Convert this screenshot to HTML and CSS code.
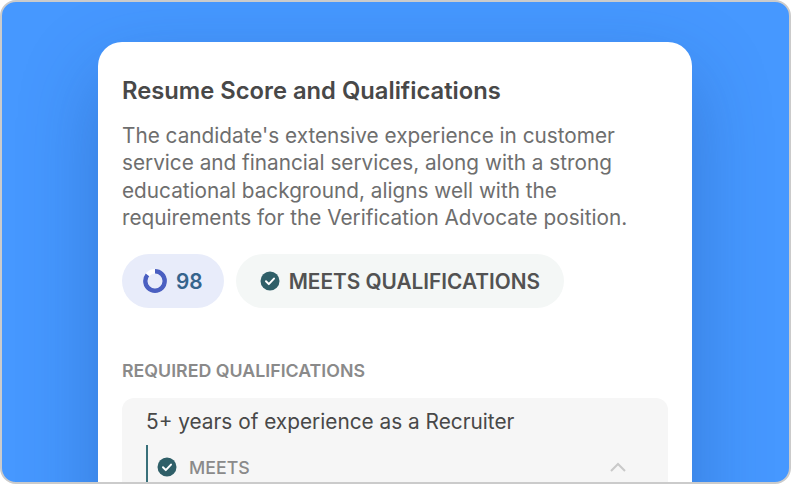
FILE: index.html
```html
<!DOCTYPE html>
<html lang="en">
<head>
<meta charset="utf-8">
<title>Resume Score and Qualifications</title>
<link rel="stylesheet" href="styles.css">
</head>
<body>
<main class="frame">
  <section class="card">
    <h1 class="title">Resume Score and Qualifications</h1>
    <p class="summary">The candidate's extensive experience in customer service and financial services, along with a strong educational background, aligns well with the requirements for the Verification Advocate position.</p>
    <div class="badges">
      <div class="badge badge-score">
        <svg class="ring" width="24" height="24" viewBox="0 0 24 24" aria-hidden="true">
          <circle cx="12" cy="12" r="9.7" fill="none" stroke="#fff" stroke-width="4.4"/>
          <circle cx="12" cy="12" r="9.7" fill="none" stroke="#4a5fc1" stroke-width="4.4" stroke-dasharray="52 60.9" transform="rotate(-90 12 12)"/>
        </svg>
        <span class="score">98</span>
      </div>
      <div class="badge badge-meets">
        <svg class="check" width="20" height="20" viewBox="0 0 20 20" aria-hidden="true">
          <circle cx="10" cy="10" r="9.5" fill="#2f5f68"/>
          <path d="M6 10.3l2.8 2.8L14 7.6" fill="none" stroke="#fff" stroke-width="2" stroke-linecap="round" stroke-linejoin="round"/>
        </svg>
        <span>MEETS QUALIFICATIONS</span>
      </div>
    </div>
    <h2 class="section-label">REQUIRED QUALIFICATIONS</h2>
    <div class="qual">
      <div class="qual-name">5+ years of experience as a Recruiter</div>
      <div class="qual-detail">
        <svg class="check" width="20" height="20" viewBox="0 0 20 20" aria-hidden="true">
          <circle cx="10" cy="10" r="9.5" fill="#2f5f68"/>
          <path d="M6 10.3l2.8 2.8L14 7.6" fill="none" stroke="#fff" stroke-width="2" stroke-linecap="round" stroke-linejoin="round"/>
        </svg>
        <span class="meets">MEETS</span>
        <svg class="chevron" width="16" height="10" viewBox="0 0 16 10" aria-hidden="true">
          <path d="M1 9l7-7 7 7" fill="none" stroke="#c9c9c9" stroke-width="2"/>
        </svg>
      </div>
    </div>
  </section>
</main>
</body>
</html>
```
FILE: styles.css
```css
* { box-sizing: border-box; }
html, body { margin: 0; height: 100%; background: #fff; }
body { overflow: hidden; font-family: Inter, "Liberation Sans", sans-serif; }
.frame {
  width: 791px;
  height: 484px;
  overflow: hidden;
  border: 2px solid #cbcbcb;
  border-radius: 16px;
  background: #4698ff;
  padding: 40px 97px 0 96px;
}
.card {
  height: 500px;
  background: #fff;
  border-radius: 24px;
  padding: 32px 24px 0;
  box-shadow: 0 30px 80px rgba(20, 60, 130, 0.32);
}
.title {
  margin: 0;
  font-size: 23.75px;
  line-height: 34px;
  font-weight: 600;
  color: #484848;
}
.summary {
  margin: 14px 0 0;
  font-size: 20.75px;
  line-height: 27.3px;
  font-weight: 400;
  color: #6e6e6e;
}
.badges { display: flex; gap: 12px; margin-top: 23px; }
.badge {
  display: flex;
  align-items: center;
  height: 54px;
  border-radius: 27px;
  font-size: 20.8px;
  font-weight: 600;
}
.badge-score { background: #e8ecfa; padding: 0 21px; gap: 9px; color: #35648c; }
.badge-meets { background: #f4f7f6; padding: 0 24px; gap: 9px; color: #525252; }
.section-label {
  margin: 52px 0 0;
  font-size: 17.8px;
  line-height: 22px;
  font-weight: 600;
  color: #8a8a8a;
}
.qual {
  margin-top: 16px;
  height: 120px;
  background: #f6f6f6;
  border-radius: 12px;
  padding: 10px 24px 0;
}
.qual-name { font-size: 20.8px; line-height: 28px; color: #484848; }
.qual-detail {
  display: flex;
  align-items: center;
  gap: 12px;
  margin-top: 9px;
  height: 44px;
  padding: 0 18px 0 9px;
  border-left: 2px solid #39707a;
}
.meets { font-size: 17.8px; font-weight: 500; color: #8a8a8a; }
.chevron { margin-left: auto; }
```
